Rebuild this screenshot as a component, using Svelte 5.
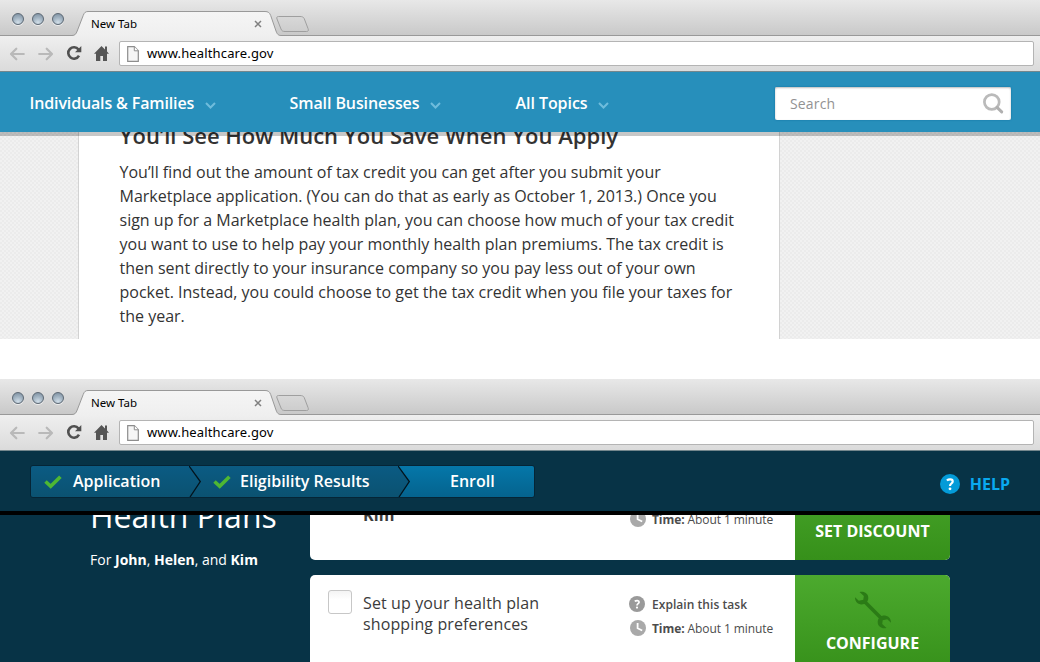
<script>
  const menus = [
    { label: 'Individuals & Families', width: 260, spacing: '-0.14px' },
    { label: 'Small Businesses', width: 226, spacing: '-0.09px' },
    { label: 'All Topics', width: 140, spacing: '-0.06px' }
  ];
</script>

{#snippet browser(id)}
  <div class="chrome">
    <div class="strip">
      <div class="lights">
        {#each [0, 1, 2] as n}<i class="light"></i>{/each}
      </div>
      <div class="tab">
        <svg class="tab-shape" width="240" height="36" viewBox="0 0 240 36">
          <defs>
            <linearGradient id="tab-{id}" x1="0" y1="0" x2="0" y2="1">
              <stop offset="0" stop-color="#f5f5f5" />
              <stop offset="1" stop-color="#efefef" />
            </linearGradient>
            <linearGradient id="new-{id}" x1="0" y1="0" x2="0" y2="1">
              <stop offset="0" stop-color="#d8d8d8" />
              <stop offset="1" stop-color="#cdcdcd" />
            </linearGradient>
          </defs>
          <path d="M0 35.500C3 35.500 4 34 5.200 31L11.200 15.500C12.400 12.500 13.500 11.500 16 11.500H193C196 11.500 197.500 12.500 198.700 15.500L204 31C205.300 34.500 206.500 35.500 209 35.500V36H0Z" fill="url(#tab-{id})" />
          <path d="M0 35.500C3 35.500 4 34 5.200 31L11.200 15.500C12.400 12.500 13.500 11.500 16 11.500H193C196 11.500 197.500 12.500 198.700 15.500L204 31C205.300 34.500 206.500 35.500 209 35.500" fill="none" stroke="#999" />
          <path d="M206.500 16.500H228C230 16.500 231.500 17 232.200 18.500L236 28.500C236.800 30.500 236.300 31.500 234.500 31.500H213C211 31.500 209.700 31 209 29L205 19C204.300 17.500 205 16.500 206.500 16.500Z" fill="url(#new-{id})" stroke="#9f9f9f" />
        </svg>
        <span class="tab-title">New Tab</span>
        <svg class="close" width="8" height="8" viewBox="0 0 8 8"><path d="M1 1L7 7M7 1L1 7" stroke="#808080" stroke-width="1.500" /></svg>
      </div>
    </div>
    <div class="toolbar">
      <svg width="16" height="14" viewBox="0 0 16 14"><path d="M7.300 1.700L2 7L7.300 12.300M2.500 7H14.800" fill="none" stroke="#b9b9b9" stroke-width="2.200" stroke-linecap="round" stroke-linejoin="round" /></svg>
      <svg class="fwd" width="16" height="14" viewBox="0 0 16 14"><path d="M8.700 1.700L14 7L8.700 12.300M1.200 7H13.500" fill="none" stroke="#b9b9b9" stroke-width="2.200" stroke-linecap="round" stroke-linejoin="round" /></svg>
      <svg class="reload" width="16" height="16" viewBox="0 0 16 16"><path d="M12.500 4.500A5.700 5.700 0 1 0 13 10.700" fill="none" stroke="#505050" stroke-width="2.600" /><path d="M15.300 1V7.300H9Z" fill="#505050" /></svg>
      <svg class="home" width="15" height="16" viewBox="0 0 15 16"><path d="M7.500 1L11 4.600V1.500H13V6.600L15 8.800H13V16H9V11H6.300V16H2V8.800H0Z" fill="#555" /></svg>
      <div class="address">
        <svg width="12" height="16" viewBox="0 0 12 16"><path d="M.7.700H7.300L11.300 4.800V15.300H.7Z" fill="#f6f6f6" stroke="#8d8d8d" stroke-width="1.200" /><path d="M7.300.700V4.800H11.300" fill="#fff" stroke="#8d8d8d" /></svg>
        <span>www.healthcare.gov</span>
      </div>
    </div>
  </div>
{/snippet}

{#snippet clock()}
  <svg width="16" height="16" viewBox="0 0 16 16"><circle cx="8" cy="8" r="8" fill="#a9a9a9" /><path d="M7.600 3V8.300L12.200 10.500" fill="none" stroke="#fff" stroke-width="1.800" /></svg>
{/snippet}

{#snippet tick()}
  <svg width="18" height="14" viewBox="0 0 18 14"><path d="M1.500 6.500L6.700 11.300L16.400 1.700" fill="none" stroke="#4eb733" stroke-width="3.600" /></svg>
{/snippet}

<div class="page">
  <section class="window first">
    {@render browser('a')}
    <nav>
      {#each menus as m}
        <div class="menu" style="width: {m.width}px; letter-spacing: {m.spacing}">
          <span>{m.label}</span>
          <svg width="11" height="7" viewBox="0 0 11 7"><path d="M1 1L5.500 5.500L10 1" fill="none" stroke="#6fbcdc" stroke-width="2" /></svg>
        </div>
      {/each}
      <div class="search">
        <span>Search</span>
        <svg width="22" height="22" viewBox="0 0 22 22"><circle cx="9.800" cy="9" r="7.400" fill="none" stroke="#bababa" stroke-width="2.700" /><path d="M15 14.400L19.700 18.900" stroke="#b0b0b0" stroke-width="3" stroke-linecap="round" /></svg>
      </div>
    </nav>
    <div class="backdrop">
      <article>
        <h2>You’ll See How Much You Save When You Apply</h2>
        <p>
          You’ll find out the amount of tax credit you can get after you submit your<br />
          Marketplace application. (You can do that as early as October 1, 2013.) Once you<br />
          sign up for a Marketplace health plan, you can choose how much of your tax credit<br />
          you want to use to help pay your monthly health plan premiums. The tax credit is<br />
          then sent directly to your insurance company so you pay less out of your own<br />
          pocket. Instead, you could choose to get the tax credit when you file your taxes for<br />
          the year.
        </p>
      </article>
    </div>
  </section>

  <section class="window second">
    {@render browser('b')}
    <header>
      <div class="steps">
        <div class="step one">{@render tick()}<span>Application</span></div>
        <svg class="divider" width="14" height="31" viewBox="0 0 14 31"><path d="M0 0L11.300 15.500L1 31" fill="none" stroke="#03131c" stroke-width="1.300" /></svg>
        <div class="step two">{@render tick()}<span>Eligibility Results</span></div>
        <svg class="divider" width="14" height="31" viewBox="0 0 14 31">
          <defs><linearGradient id="enroll" x1="0" y1="0" x2="0" y2="1"><stop offset="0" stop-color="#0577a9" /><stop offset="1" stop-color="#05638e" /></linearGradient></defs>
          <path d="M0 0L11.300 15.500L1 31H14V0Z" fill="url(#enroll)" /><path d="M0 0L11.300 15.500L1 31" fill="none" stroke="#03131c" stroke-width="1.300" />
        </svg>
        <div class="step three"><span>Enroll</span></div>
      </div>
      <div class="help">
        <svg width="20" height="20" viewBox="0 0 20 20"><circle cx="10" cy="10" r="10" fill="#049bd8" /><path d="M6.900 6.500C8.500 5 12.700 4.600 12.700 7.400C12.700 9.500 10 9.500 10 11.900" fill="none" stroke="#fff" stroke-width="2.200" /><circle cx="10" cy="14.800" r="1.400" fill="#fff" /></svg>
        <span>HELP</span>
      </div>
    </header>
    <main>
      <aside>
        <h1>Health Plans</h1>
        <p>For <b>John</b>, <b>Helen</b>, and <b>Kim</b></p>
      </aside>
      <div class="cards">
        <div class="card discount">
          <div class="name"><b>Kim</b></div>
          <div class="facts"><div class="fact">{@render clock()}<span><b>Time:</b> About 1 minute</span></div></div>
          <div class="action"><span>SET DISCOUNT</span></div>
        </div>
        <div class="card configure">
          <div class="box"></div>
          <div class="name">Set up your health plan<br />shopping preferences</div>
          <div class="facts">
            <div class="fact explain">
              <svg width="16" height="16" viewBox="0 0 16 16"><circle cx="8" cy="8" r="8" fill="#9a9a9a" /><path d="M5.800 5.400C7 4.200 10.100 4.100 10.100 6.100C10.100 7.700 8 7.700 8 9.500" fill="none" stroke="#fff" stroke-width="1.700" /><circle cx="8" cy="11.600" r="1.100" fill="#fff" /></svg>
              <b>Explain this task</b>
            </div>
            <div class="fact">{@render clock()}<span><b>Time:</b> About 1 minute</span></div>
          </div>
          <div class="action">
            <svg width="38" height="38" viewBox="0 0 38 38"><path d="M11 11L28 28" stroke="#2b7b16" stroke-width="3.600" /><path d="M5.500 1C10 -.3 14.500 2.500 14.300 7C14.200 11.500 10 14.200 6.200 13.300C2.800 12.600.8 9.800 1 6.300L4.800 9.700L9.300 8.700L9.800 5Z" fill="#2b7b16" /><path d="M32.500 37C28 38.300 23.500 35.500 23.700 31C23.800 26.500 28 23.800 31.800 24.700C35.200 25.400 37.200 28.200 37 31.700L33.200 28.300L28.700 29.300L28.200 33Z" fill="#2b7b16" /></svg>
            <span>CONFIGURE</span>
          </div>
        </div>
      </div>
    </main>
  </section>
</div>

<style>
  :global(body) { margin: 0; background: #fff; overflow: hidden; }
  .page { width: 1040px; height: 662px; display: flex; flex-direction: column; gap: 40px; overflow: hidden; font-family: "Open Sans", sans-serif; }
  .page :global(svg) { display: block; flex: none; }
  .page :global(*) { box-sizing: border-box; }
  .window { display: flex; flex-direction: column; overflow: hidden; flex: none; }
  .first { height: 339px; }
  .second { height: 283px; background: #073346; }
  span { white-space: nowrap; }

  .chrome { height: 72px; flex: none; border-bottom: 1px solid #74878d; font-family: "Noto Sans", sans-serif; color: #000; }
  .strip { height: 36px; display: flex; background: linear-gradient(#e8e8e8, #c9c9c9); border-bottom: 1px solid #999; }
  .lights { display: flex; gap: 8px; padding: 13px 0 0 12px; width: 72px; flex: none; }
  .light { width: 12px; height: 12px; border-radius: 50%; border: 1px solid #5c6874; background: radial-gradient(circle at 50% 85%, #d2dfe9 0, #a6b7c5 45%, #788b9c 100%); box-shadow: 0 1px 0 #eee; }
  .tab { width: 240px; height: 36px; display: grid; grid-template-columns: 19px 162px 59px; }
  .tab-shape { grid-area: 1 / 1 / 2 / 4; }
  .tab-title { grid-area: 1 / 2; font-size: 11.500px; line-height: 16px; padding-top: 16px; }
  .close { grid-area: 1 / 3; margin: 20px 0 0 1px; }
  .toolbar { height: 35px; display: flex; align-items: center; padding: 0 6px 0 9px; background: linear-gradient(#efefef, #dbdbdb); }
  .fwd { margin-left: 13px; }
  .reload { margin: -1px 0 0 11.500px; }
  .home { margin: -1px 0 0 12.500px; }
  .address { flex: 1; height: 25px; margin-left: 10px; background: #fff; border: 1px solid #b4b4b4; border-radius: 2px; display: flex; align-items: center; gap: 8px; padding-left: 7px; font-size: 13px; letter-spacing: .14px; }
  .address span { padding-bottom: 2px; }

  nav { height: 60px; flex: none; background: #278fbb; display: flex; align-items: center; padding: 3px 29px 0 29.500px; position: relative; z-index: 1; box-shadow: 0 4px 0 rgba(0, 0, 0, .22); color: #fff; font-size: 16px; font-weight: 600; }
  .menu { display: flex; align-items: center; gap: 10.500px; flex: none; }
  .menu span { padding-bottom: 2px; }
  .menu svg { margin-top: 3px; }
  .search { margin-left: auto; width: 236px; height: 33px; background: #fff; border-radius: 2px; box-shadow: inset 0 1px 2px #bbb, 0 0 2px #126f9d; display: flex; align-items: center; justify-content: space-between; padding: 0 7px 0 15px; color: #929292; font-size: 14px; font-weight: 400; letter-spacing: .15px; }
  .backdrop { flex: 1; padding-left: 78px; background: repeating-conic-gradient(#ebebeb 0 25%, #f1f1f1 0 50%) 0 0 / 4px 4px; }
  article { width: 702px; height: 207px; background: #fff; border: solid #d2d2d2; border-width: 0 1px; padding-left: 40.500px; overflow: hidden; color: #333; }
  h2 { margin: -14px 0 0; font-size: 22px; line-height: 34px; font-weight: 600; white-space: nowrap; }
  article p { margin: 8px 0 0; font-size: 16px; line-height: 24px; white-space: nowrap; }

  header { height: 60px; flex: none; padding: 14px 30px 0; display: flex; justify-content: space-between; position: relative; z-index: 1; background: #073346; box-shadow: 0 4px 0 #000; }
  .steps { display: flex; height: 33px; border: 1px solid #052536; border-radius: 3px; overflow: hidden; color: #fff; font-size: 16px; font-weight: 600; }
  .step { display: flex; align-items: center; background: linear-gradient(#0b5b83, #0b5271); height: 31px; }
  .step span { padding-bottom: 2px; }
  .one { width: 158px; padding-left: 13px; gap: 11px; }
  .two { width: 195px; padding-left: 10px; gap: 9px; }
  .three { width: 122px; padding-left: 38px; background: linear-gradient(#0577a9, #05638e); }
  .divider { background: linear-gradient(#0b5b83, #0b5271); }
  .help { display: flex; align-items: center; gap: 10px; height: 38px; color: #09a9ef; font-weight: 700; font-size: 16px; }
  main { flex: 1; display: flex; overflow: hidden; }
  aside { width: 310px; flex: none; padding-left: 90px; color: #fff; }
  h1 { margin: -16px 0 0; font-size: 32px; line-height: 42px; font-weight: 400; white-space: nowrap; }
  aside p { margin: 13px 0 0; font-size: 14px; line-height: 20px; }
  .cards { width: 640px; margin-top: -49px; display: flex; flex-direction: column; gap: 15px; }
  .card { display: flex; height: 98px; flex: none; background: #fff; border-radius: 5px; overflow: hidden; color: #3b3b3b; }
  .box { width: 24px; height: 24px; margin: 15px 0 0 18px; border: 1px solid #c7c7c7; border-radius: 3px; background: linear-gradient(#f4f4f4, #fff 40%); }
  .name { font-size: 16px; line-height: 21px; letter-spacing: .12px; width: 267px; padding-top: 18px; margin-left: 11px; flex: none; }
  .discount .name { margin-left: 53px; padding-top: 43px; }
  .facts { width: 165px; padding-top: 21px; flex: none; font-size: 12px; color: #4c4c4c; display: flex; flex-direction: column; gap: 8px; letter-spacing: -.08px; }
  .discount .facts { padding-top: 49px; }
  .fact { display: flex; align-items: center; gap: 6px; height: 16px; }
  .explain { margin-left: -1px; gap: 7px; letter-spacing: .05px; }
  .explain b { font-weight: 600; }
  .action { width: 155px; flex: none; background: linear-gradient(#4caa2e, #36901a); color: #fff; font-weight: 700; font-size: 16px; line-height: 22px; display: flex; flex-direction: column; align-items: center; }
  .discount .action { padding-top: 58px; }
  .configure .action { padding-top: 16px; gap: 3px; }
</style>
